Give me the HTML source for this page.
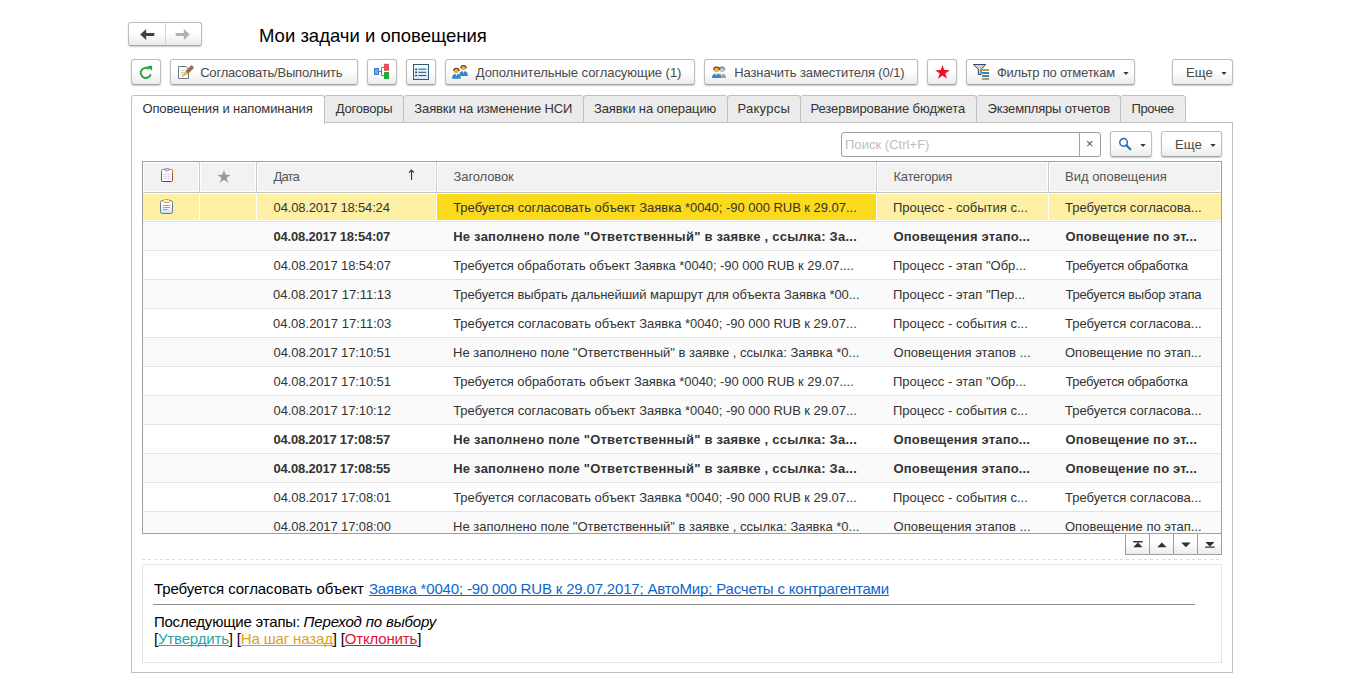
<!DOCTYPE html>
<html lang="ru"><head><meta charset="utf-8"><title>Мои задачи и оповещения</title>
<style>
*{box-sizing:border-box;margin:0;padding:0}
html,body{width:1366px;height:696px;overflow:hidden;background:#fff}
body{position:relative;font-family:"Liberation Sans",sans-serif;font-size:13px;color:#333}
.abs{position:absolute}
a{text-decoration:underline;text-decoration-skip-ink:none;text-underline-offset:1px;text-decoration-thickness:1px}
.btn{position:absolute;top:59px;height:26px;border:1px solid #bcbcbc;border-bottom-color:#a6a6a6;border-radius:3px;
 background:linear-gradient(#ffffff 0%,#ffffff 45%,#ebebeb 100%);box-shadow:0 1px 1.5px rgba(0,0,0,.22);
 white-space:nowrap;line-height:25px;color:#4a4a4a}
.btn svg{position:absolute}
.btn .t{position:absolute;top:0}
.caret{position:absolute}
#title{position:absolute;left:259px;top:24px;font-size:18.5px;line-height:24px;color:#000;white-space:nowrap}
.tab{position:absolute;top:95px;height:28px;border:1px solid #c0c0c0;border-radius:3px 3px 0 0;background:#ebebeb;line-height:25px;color:#333;white-space:nowrap}
.tab span{position:absolute;left:11px;top:0}
.tab.act{background:#fff;border-bottom:none;z-index:2;height:29px}
.panel{position:absolute;left:131px;top:122px;width:1102px;height:551px;border:1px solid #bfbfbf;background:#fff}
.grid{position:absolute;left:142px;top:161px;width:1080px;height:373px;border:1px solid #9e9e9e;overflow:hidden;background:#fff}
.hd{position:absolute;left:0;top:0;width:1078px;height:31px;background:#f2f2f2;border-bottom:1px solid #c4c4c4}
.hd>div{position:absolute;top:0;height:30px;box-shadow:inset 0 0 0 1px #fff;line-height:30px;color:#555;border-left:1px solid #cbcbcb;white-space:nowrap}
.hd>div>span{position:absolute;left:16px;top:0}
.row{position:absolute;left:0;width:1078px;height:29px;border-bottom:1px solid #e4e4e4;background:#fff;line-height:30px;white-space:nowrap;color:#333}
.row.alt{background:#fafafa}
.row.b{font-weight:bold}
.row span{position:absolute;top:0}
.c1{left:130px}.c2{left:310px}.c3{left:750px}.c4{left:922px}
.row.sel:after{content:"";position:absolute;left:0;top:1px;width:1078px;height:26px;background:#fdf0a4;z-index:0}
.row.sel:before{content:"";position:absolute;left:56px;top:1px;width:1px;height:26px;background:#fff;box-shadow:57px 0 #fff,237px 0 #fff,677px 0 #fff,849px 0 #fff;z-index:1}
.selc{position:absolute;left:294px;top:1px;width:439px;height:26px;background:#fbd91c;z-index:1}
.row span,.row svg{z-index:2}
#r1c1{letter-spacing:-0.167px;margin-left:0.60px}
#r1c2{letter-spacing:-0.027px;margin-left:0.20px}
#r1c3{letter-spacing:0.000px;margin-left:0.00px}
#r1c4{letter-spacing:0.000px;margin-left:0.00px}
#r2c1{letter-spacing:-0.222px;margin-left:0.60px}
#r2c2{letter-spacing:0.233px;margin-left:0.20px}
#r2c3{letter-spacing:0.167px;margin-left:0.50px}
#r2c4{letter-spacing:0.172px;margin-left:0.40px}
#r3c1{letter-spacing:-0.111px;margin-left:0.60px}
#r3c2{letter-spacing:-0.061px;margin-left:0.20px}
#r3c3{letter-spacing:0.000px;margin-left:0.00px}
#r3c4{letter-spacing:-0.272px;margin-left:0.40px}
#r4c1{letter-spacing:0.000px;margin-left:0.00px}
#r4c2{letter-spacing:-0.052px;margin-left:0.20px}
#r4c3{letter-spacing:0.000px;margin-left:0.00px}
#r4c4{letter-spacing:-0.205px;margin-left:0.40px}
#r5c1{letter-spacing:0.000px;margin-left:0.00px}
#r5c2{letter-spacing:-0.027px;margin-left:0.20px}
#r5c3{letter-spacing:0.000px;margin-left:0.00px}
#r5c4{letter-spacing:0.000px;margin-left:0.00px}
#r6c1{letter-spacing:-0.111px;margin-left:0.60px}
#r6c2{letter-spacing:0.000px;margin-left:0.00px}
#r6c3{letter-spacing:0.040px;margin-left:0.50px}
#r6c4{letter-spacing:0.000px;margin-left:0.00px}
#r7c1{letter-spacing:-0.111px;margin-left:0.60px}
#r7c2{letter-spacing:-0.061px;margin-left:0.20px}
#r7c3{letter-spacing:0.000px;margin-left:0.00px}
#r7c4{letter-spacing:-0.272px;margin-left:0.40px}
#r8c1{letter-spacing:-0.111px;margin-left:0.60px}
#r8c2{letter-spacing:-0.027px;margin-left:0.20px}
#r8c3{letter-spacing:0.000px;margin-left:0.00px}
#r8c4{letter-spacing:0.000px;margin-left:0.00px}
#r9c1{letter-spacing:-0.222px;margin-left:0.60px}
#r9c2{letter-spacing:0.233px;margin-left:0.20px}
#r9c3{letter-spacing:0.167px;margin-left:0.50px}
#r9c4{letter-spacing:0.172px;margin-left:0.40px}
#r10c1{letter-spacing:-0.222px;margin-left:0.60px}
#r10c2{letter-spacing:0.233px;margin-left:0.20px}
#r10c3{letter-spacing:0.167px;margin-left:0.50px}
#r10c4{letter-spacing:0.172px;margin-left:0.40px}
#r11c1{letter-spacing:-0.111px;margin-left:0.60px}
#r11c2{letter-spacing:-0.027px;margin-left:0.20px}
#r11c3{letter-spacing:0.000px;margin-left:0.00px}
#r11c4{letter-spacing:0.000px;margin-left:0.00px}
#r12c1{letter-spacing:-0.111px;margin-left:0.60px}
#r12c2{letter-spacing:0.000px;margin-left:0.00px}
#r12c3{letter-spacing:0.040px;margin-left:0.50px}
#r12c4{letter-spacing:0.000px;margin-left:0.00px}
#title{letter-spacing:0.000px;margin-left:0.00px}
#b2{letter-spacing:-0.210px;margin-left:0.20px}
#b5{letter-spacing:-0.052px;margin-left:0.80px}
#b6{letter-spacing:-0.127px;margin-left:0.30px}
#b8{letter-spacing:-0.218px;margin-left:0.90px}
#t1{letter-spacing:-0.109px;margin-left:-0.60px}
#t2{letter-spacing:-0.243px;margin-left:-0.20px}
#t3{letter-spacing:-0.127px;margin-left:-0.70px}
#t4{letter-spacing:-0.094px;margin-left:-1.10px}
#t5{letter-spacing:0.267px;margin-left:-1.60px}
#t6{letter-spacing:-0.067px;margin-left:-1.60px}
#t7{letter-spacing:-0.176px;margin-left:-0.40px}
#t8{letter-spacing:-0.380px;margin-left:-0.50px}
#ph{letter-spacing:0.031px;margin-left:-1.00px}
#h1{letter-spacing:-0.800px;margin-left:0.40px}
#h2{letter-spacing:-0.125px;margin-left:0.60px}
#h3{letter-spacing:-0.237px;margin-left:0.50px}
#h4{letter-spacing:0.000px;margin-left:0.00px}
#d1{letter-spacing:-0.052px;margin-left:0.90px}
#d2{letter-spacing:-0.172px;margin-left:-0.10px}
#d3{letter-spacing:-0.200px;margin-left:0.90px}
#d4{letter-spacing:-0.156px;margin-left:0.60px}
#d5{letter-spacing:-0.160px;margin-left:0.90px}
#b9{letter-spacing:0.000px;margin-left:0.00px}
#b11{letter-spacing:0.000px;margin-left:0.00px}
</style></head><body>

<!-- navigation -->
<div class="abs" style="left:128px;top:22px;width:74px;height:24px;border:1px solid #bcbcbc;border-bottom-color:#a6a6a6;border-radius:3px;background:linear-gradient(#fff 40%,#ebebeb);box-shadow:0 1px 1.5px rgba(0,0,0,.22)">
 <div class="abs" style="left:36px;top:0;width:1px;height:22px;background:#d4d4d4"></div>
 <svg class="abs" style="left:11px;top:6px" width="15" height="11" viewBox="0 0 15 11"><path d="M6.2 0 L0.2 5.5 L6.2 11 L6.2 7 L14.3 7 L14.3 4 L6.2 4 Z" fill="#404040"/></svg>
 <svg class="abs" style="left:46px;top:6px" width="15" height="11" viewBox="0 0 15 11"><path d="M8.8 0 L14.8 5.5 L8.8 11 L8.8 7 L0.7 7 L0.7 4 L8.8 4 Z" fill="#b2b2b2"/></svg>
</div>
<div id="title">Мои задачи и оповещения</div>

<!-- toolbar -->
<div class="btn" style="left:131px;width:30px">
 <svg style="left:7px;top:5px" width="14" height="14" viewBox="0 0 14 14"><path d="M10.1 3.9 A5.1 5.1 0 1 0 11.8 9.2" fill="none" stroke="#2fa03c" stroke-width="1.9"/><path d="M8.1 1 L13.1 0.7 L13.1 5.9 Z" fill="#2fa03c"/></svg>
</div>
<div class="btn" style="left:170px;width:188px">
 <svg style="left:7px;top:5px" width="17" height="14" viewBox="0 0 17 14"><path d="M0.5 1.5 H8 L10.5 4 V13.5 H0.5 Z" fill="#fff" stroke="#6c7884"/><path d="M2.5 5.5h4M2.5 7.5h3.5M2.5 9.5h2" stroke="#c4c8cc"/><path d="M12.8 0.7 Q13.6 0 14.4 0.8 L15.5 1.9 Q16.2 2.7 15.5 3.5 L10.2 8.8 L7.4 6.0 Z" fill="#9c6c44"/><path d="M7.4 6.0 L10.2 8.8 L3.0 12.6 Z" fill="#f2b62c"/></svg>
 <span class="t" id="b2" style="left:29px">Согласовать/Выполнить</span>
</div>
<div class="btn" style="left:367px;width:30px">
 <svg style="left:5px;top:3px" width="17" height="17" viewBox="0 0 17 17"><path d="M6 8.5H8.5M8.5 4.4V12.6M8.5 4.4H11M8.5 12.6H11" stroke="#6a7888" fill="none"/><rect x="1.5" y="5.5" width="4" height="6" fill="#6aaae6" stroke="#3f80c8"/><rect x="11" y="0.8" width="5" height="7" fill="#e2525a"/><rect x="11" y="9" width="5" height="7" fill="#20aa3a"/></svg>
</div>
<div class="btn" style="left:406px;width:30px">
 <svg style="left:6px;top:4px" width="16" height="16" viewBox="0 0 16 16"><defs><linearGradient id="lg" x1="0" y1="0" x2="0" y2="1"><stop offset="0" stop-color="#fafcfe"/><stop offset="1" stop-color="#d6e6f6"/></linearGradient></defs><rect x="0.5" y="0.5" width="15" height="15" fill="url(#lg)" stroke="#2c5a7c"/><path d="M2.2 5.2h1.8M2.2 8.3h1.8M2.2 11.5h1.8" stroke="#1c4464" stroke-width="1.6"/><path d="M5.3 5.2h8M5.3 8.3h8M5.3 11.5h8" stroke="#2a5272" stroke-width="1"/></svg>
</div>
<div class="btn" style="left:445px;width:250px">
 <svg style="left:6px;top:4px" width="18" height="16" viewBox="0 0 18 16"><path d="M7.1 11.9 Q7.1 6.9 11.5 6.9 Q15.9 6.9 15.9 11.9 Z" fill="#2e8ccc"/><path d="M10.4 6.7 L11.5 9.3 L12.6 6.7 Z" fill="#fff"/><circle cx="11.5" cy="3.6" r="2.7" fill="#f0aa4c"/><path d="M8.8 4.2 A2.7 2.7 0 0 1 14.2 4.2" fill="none" stroke="#5c3a18" stroke-width="1.1"/><path d="M0 14.8 Q0 9.8 4.4 9.8 Q8.8 9.8 8.8 14.8 Z" fill="#2e8ccc"/><path d="M3.3000000000000003 9.600000000000001 L4.4 12.200000000000001 L5.5 9.600000000000001 Z" fill="#fff"/><circle cx="4.4" cy="6.4" r="2.7" fill="#f0aa4c"/><path d="M1.7000000000000002 7.0 A2.7 2.7 0 0 1 7.1000000000000005 7.0" fill="none" stroke="#5c3a18" stroke-width="1.1"/></svg>
 <span class="t" id="b5" style="left:29px">Дополнительные согласующие (1)</span>
</div>
<div class="btn" style="left:704px;width:214px">
 <svg style="left:6px;top:5px" width="16" height="14" viewBox="0 0 16 14"><path d="M6.5 12.9 Q6.5 8.4 10.75 8.4 Q15 8.4 15 12.9 Z" fill="#a2a2a2"/><path d="M9.65 8.200000000000001 L10.75 10.8 L11.85 8.200000000000001 Z" fill="#fff"/><circle cx="11.1" cy="4.3" r="2.8" fill="#c4c4c4"/><path d="M8.3 4.8999999999999995 A2.8 2.8 0 0 1 13.899999999999999 4.8999999999999995" fill="none" stroke="#70808a" stroke-width="1.1"/><path d="M0.9 12.9 Q0.9 8.4 5.5 8.4 Q10.1 8.4 10.1 12.9 Z" fill="#2e8ccc"/><path d="M4.4 8.200000000000001 L5.5 10.8 L6.6 8.200000000000001 Z" fill="#fff"/><circle cx="5.6" cy="4.3" r="2.9" fill="#f0aa4c"/><path d="M2.6999999999999997 4.8999999999999995 A2.9 2.9 0 0 1 8.5 4.8999999999999995" fill="none" stroke="#5c3a18" stroke-width="1.1"/></svg>
 <span class="t" id="b6" style="left:29px">Назначить заместителя (0/1)</span>
</div>
<div class="btn" style="left:927px;width:30px">
 <svg style="left:6.5px;top:5px" width="15" height="14" viewBox="0 0 15 14"><path d="M7.5 0 L9.2 5.1 L14.8 5.2 L10.3 8.4 L12 13.8 L7.5 10.5 L3 13.8 L4.7 8.4 L0.2 5.2 L5.8 5.1 Z" fill="#e8112d"/></svg>
</div>
<div class="btn" style="left:966px;width:169px">
 <svg style="left:5px;top:3px" width="18" height="18" viewBox="0 0 18 18"><path d="M1.4 1.5 H13.7 L9.1 6.4 V11.6 H6.3 V6.4 Z" fill="#ced2d6" stroke="#3a4060" stroke-width="1"/><path d="M10.1 6.9h6.9M10.1 15.9h6.9" stroke="#c8924a" stroke-width="2"/><path d="M10.1 9.9h6.9M10.1 12.9h6.9" stroke="#1e8cc8" stroke-width="2"/></svg>
 <span class="t" id="b8" style="left:29px">Фильтр по отметкам</span>
 <svg class="caret" style="left:156px;top:12px" width="6" height="3" viewBox="0 0 6 3"><path d="M0.3 0H5.7L3 3Z" fill="#3a3a3a"/></svg>
</div>
<div class="btn" style="left:1172px;width:61px">
 <span class="t" id="b9" style="left:13px;font-size:13.2px">Еще</span>
 <svg class="caret" style="left:48px;top:12px" width="6" height="3" viewBox="0 0 6 3"><path d="M0.3 0H5.7L3 3Z" fill="#3a3a3a"/></svg>
</div>

<!-- panel + tabs -->
<div class="panel"></div>
<div class="tab act" style="left:131px;width:194px"><span id="t1">Оповещения и напоминания</span></div>
<div class="tab" style="left:324px;width:80px"><span id="t2">Договоры</span></div>
<div class="tab" style="left:403px;width:181px"><span id="t3">Заявки на изменение НСИ</span></div>
<div class="tab" style="left:583px;width:145px"><span id="t4">Заявки на операцию</span></div>
<div class="tab" style="left:727px;width:74px"><span id="t5">Ракурсы</span></div>
<div class="tab" style="left:800px;width:177px"><span id="t6">Резервирование бюджета</span></div>
<div class="tab" style="left:976px;width:145px"><span id="t7">Экземпляры отчетов</span></div>
<div class="tab" style="left:1120px;width:66px"><span id="t8">Прочее</span></div>

<!-- search row -->
<div class="abs" style="left:841px;top:132px;width:260px;height:25px;border:1px solid #9e9e9e;border-radius:3px;background:#fff">
 <span class="abs" id="ph" style="left:4px;top:0;line-height:24px;color:#bdbdbd;white-space:nowrap">Поиск (Ctrl+F)</span>
 <div class="abs" style="left:237px;top:0;width:1px;height:23px;background:#a4a4a4"></div>
 <span class="abs" style="left:244px;top:0;line-height:23px;color:#4a4a4a;font-size:12.5px">×</span>
</div>
<div class="btn" style="left:1110px;top:131px;width:42px">
 <svg style="left:7px;top:5px" width="14" height="15" viewBox="0 0 14 15"><circle cx="5.6" cy="5.4" r="3.8" fill="none" stroke="#2e66b4" stroke-width="1.5"/><path d="M8.3 8.2 L12.4 12.2" stroke="#2e66b4" stroke-width="2.1" stroke-linecap="round"/></svg>
 <svg class="caret" style="left:29px;top:12px" width="6" height="3" viewBox="0 0 6 3"><path d="M0.3 0H5.7L3 3Z" fill="#3a3a3a"/></svg>
</div>
<div class="btn" style="left:1161px;top:131px;width:61px">
 <span class="t" id="b11" style="left:13px;font-size:13.2px">Еще</span>
 <svg class="caret" style="left:48px;top:12px" width="6" height="3" viewBox="0 0 6 3"><path d="M0.3 0H5.7L3 3Z" fill="#3a3a3a"/></svg>
</div>

<!-- grid -->
<div class="grid">
 <div class="hd">
  <div style="left:0;width:56px;border-left:none"><svg class="abs" style="left:18px;top:6px" width="12" height="14" viewBox="0 0 12 14"><defs><linearGradient id="cb" x1="0" y1="0" x2="0" y2="1"><stop offset="0" stop-color="#c8782c"/><stop offset="1" stop-color="#8c2c2c"/></linearGradient></defs><rect x="0.5" y="1.5" width="11" height="12" rx="1" fill="#fff" stroke="url(#cb)"/><rect x="4" y="0.4" width="4" height="2.4" rx="0.8" fill="#ddd" stroke="#667" stroke-width=".6"/><path d="M2.5 6.2h7M2.5 8.3h7M2.5 10.4h7" stroke="#b8b0d8" stroke-width=".9" stroke-dasharray="1 .5"/></svg></div>
  <div style="left:56px;width:57px"><svg class="abs" style="left:17px;top:8px" width="14" height="13" viewBox="0 0 15 14"><path d="M7.5 0 L9.2 5.1 L14.8 5.2 L10.3 8.4 L12 13.8 L7.5 10.5 L3 13.8 L4.7 8.4 L0.2 5.2 L5.8 5.1 Z" fill="#9a9a9a"/></svg></div>
  <div style="left:113px;width:180px"><span id="h1">Дата</span><svg class="abs" style="left:151px;top:7px" width="7" height="12" viewBox="0 0 7 12"><path d="M3.5 1v10M1 3.6L3.5 1L6 3.6" fill="none" stroke="#333" stroke-width="1.1"/></svg></div>
  <div style="left:293px;width:440px"><span id="h2">Заголовок</span></div>
  <div style="left:733px;width:172px"><span id="h3">Категория</span></div>
  <div style="left:905px;width:173px"><span id="h4">Вид оповещения</span></div>
 </div>
<div class="row sel" style="top:31px"><div class="selc"></div><svg class="abs" style="left:17px;top:6px" width="13" height="15" viewBox="0 0 13 15"><defs><linearGradient id="cg" x1="0" y1="0" x2="0" y2="1"><stop offset="0.45" stop-color="#fff"/><stop offset="1" stop-color="#c4def4"/></linearGradient></defs><rect x="0.5" y="1.5" width="12" height="13" rx="1.8" fill="url(#cg)" stroke="#687888"/><rect x="3.5" y="0.5" width="6" height="3" rx="1" fill="#fff0b0" stroke="#e0a030"/><path d="M2.8 6.5h7.4M2.8 8.5h7.4" stroke="#909aa4" stroke-width=".9"/><path d="M2.8 10.6h4.5" stroke="#5a9aa0" stroke-width=".9"/></svg><span id="r1c1" class="c1">04.08.2017 18:54:24</span><span id="r1c2" class="c2">Требуется согласовать объект Заявка *0040; -90 000 RUB к 29.07...</span><span id="r1c3" class="c3">Процесс - события с...</span><span id="r1c4" class="c4">Требуется согласова...</span></div>
<div class="row alt b" style="top:60px"><span id="r2c1" class="c1">04.08.2017 18:54:07</span><span id="r2c2" class="c2">Не заполнено поле "Ответственный" в заявке , ссылка: За...</span><span id="r2c3" class="c3">Оповещения этапо...</span><span id="r2c4" class="c4">Оповещение по эт...</span></div>
<div class="row" style="top:89px"><span id="r3c1" class="c1">04.08.2017 18:54:07</span><span id="r3c2" class="c2">Требуется обработать объект Заявка *0040; -90 000 RUB к 29.07....</span><span id="r3c3" class="c3">Процесс - этап "Обр...</span><span id="r3c4" class="c4">Требуется обработка</span></div>
<div class="row alt" style="top:118px"><span id="r4c1" class="c1">04.08.2017 17:11:13</span><span id="r4c2" class="c2">Требуется выбрать дальнейший маршрут для объекта Заявка *00...</span><span id="r4c3" class="c3">Процесс - этап "Пер...</span><span id="r4c4" class="c4">Требуется выбор этапа</span></div>
<div class="row" style="top:147px"><span id="r5c1" class="c1">04.08.2017 17:11:03</span><span id="r5c2" class="c2">Требуется согласовать объект Заявка *0040; -90 000 RUB к 29.07...</span><span id="r5c3" class="c3">Процесс - события с...</span><span id="r5c4" class="c4">Требуется согласова...</span></div>
<div class="row alt" style="top:176px"><span id="r6c1" class="c1">04.08.2017 17:10:51</span><span id="r6c2" class="c2">Не заполнено поле "Ответственный" в заявке , ссылка: Заявка *0...</span><span id="r6c3" class="c3">Оповещения этапов ...</span><span id="r6c4" class="c4">Оповещение по этап...</span></div>
<div class="row" style="top:205px"><span id="r7c1" class="c1">04.08.2017 17:10:51</span><span id="r7c2" class="c2">Требуется обработать объект Заявка *0040; -90 000 RUB к 29.07....</span><span id="r7c3" class="c3">Процесс - этап "Обр...</span><span id="r7c4" class="c4">Требуется обработка</span></div>
<div class="row alt" style="top:234px"><span id="r8c1" class="c1">04.08.2017 17:10:12</span><span id="r8c2" class="c2">Требуется согласовать объект Заявка *0040; -90 000 RUB к 29.07...</span><span id="r8c3" class="c3">Процесс - события с...</span><span id="r8c4" class="c4">Требуется согласова...</span></div>
<div class="row b" style="top:263px"><span id="r9c1" class="c1">04.08.2017 17:08:57</span><span id="r9c2" class="c2">Не заполнено поле "Ответственный" в заявке , ссылка: За...</span><span id="r9c3" class="c3">Оповещения этапо...</span><span id="r9c4" class="c4">Оповещение по эт...</span></div>
<div class="row alt b" style="top:292px"><span id="r10c1" class="c1">04.08.2017 17:08:55</span><span id="r10c2" class="c2">Не заполнено поле "Ответственный" в заявке , ссылка: За...</span><span id="r10c3" class="c3">Оповещения этапо...</span><span id="r10c4" class="c4">Оповещение по эт...</span></div>
<div class="row" style="top:321px"><span id="r11c1" class="c1">04.08.2017 17:08:01</span><span id="r11c2" class="c2">Требуется согласовать объект Заявка *0040; -90 000 RUB к 29.07...</span><span id="r11c3" class="c3">Процесс - события с...</span><span id="r11c4" class="c4">Требуется согласова...</span></div>
<div class="row alt" style="top:350px"><span id="r12c1" class="c1">04.08.2017 17:08:00</span><span id="r12c2" class="c2">Не заполнено поле "Ответственный" в заявке , ссылка: Заявка *0...</span><span id="r12c3" class="c3">Оповещения этапов ...</span><span id="r12c4" class="c4">Оповещение по этап...</span></div>
</div>

<!-- scroll buttons -->
<div class="abs" style="left:1125px;top:533px;width:97px;height:22px;border:1px solid #9e9e9e;background:linear-gradient(#fff 40%,#ebebeb)">
 <div class="abs" style="left:23px;top:0;width:1px;height:20px;background:#9e9e9e"></div>
 <div class="abs" style="left:47px;top:0;width:1px;height:20px;background:#9e9e9e"></div>
 <div class="abs" style="left:71px;top:0;width:1px;height:20px;background:#9e9e9e"></div>
 <svg class="abs" style="left:7px;top:7px" width="10" height="7" viewBox="0 0 10 7"><path d="M0.2 0h9.4v1.4H0.2zM4.9 1.4L9.6 6.2H0.2z" fill="#303030"/></svg>
 <svg class="abs" style="left:31px;top:8px" width="10" height="6" viewBox="0 0 10 6"><path d="M4.9 0.4L9.6 5.2H0.2z" fill="#303030"/></svg>
 <svg class="abs" style="left:55px;top:8px" width="10" height="6" viewBox="0 0 10 6"><path d="M4.9 5.2L9.6 0.4H0.2z" fill="#303030"/></svg>
 <svg class="abs" style="left:79px;top:8px" width="10" height="7" viewBox="0 0 10 7"><path d="M0.2 4.4h9.4v1.4H0.2zM4.9 4.4L9.6 0H0.2z" fill="#303030"/></svg>
</div>

<!-- dashed separator -->
<div class="abs" style="left:142px;top:559px;width:1078px;height:1px;background:repeating-linear-gradient(90deg,#dadada 0,#dadada 3px,transparent 3px,transparent 6px)"></div>

<!-- details -->
<div class="abs" style="left:142px;top:564px;width:1080px;height:99px;border:1px solid #e4e4e4;background:#fff;font-size:15px;color:#000;line-height:17px">
 <span class="abs" id="d1" style="left:10px;top:15px;white-space:nowrap">Требуется согласовать объект</span><a class="abs" id="d2" style="left:226px;top:15px;white-space:nowrap;color:#0b67d0">Заявка *0040; -90 000 RUB к 29.07.2017; АвтоМир; Расчеты с контрагентами</a>
 <div class="abs" style="left:10px;top:39px;width:1042px;height:1px;background:#8c8c8c"></div>
 <span class="abs" id="d3" style="left:10px;top:48px;white-space:nowrap">Последующие этапы:</span><i class="abs" id="d4" style="left:160px;top:48px;white-space:nowrap">Переход по выбору</i>
 <div class="abs" style="left:10px;top:65px;white-space:nowrap"><span id="d5">[<a style="color:#2aa5a5">Утвердить</a>] [<a style="color:#d9a020">На шаг назад</a>] [<a style="color:#dc143c">Отклонить</a>]</span></div>
</div>
</body></html>
